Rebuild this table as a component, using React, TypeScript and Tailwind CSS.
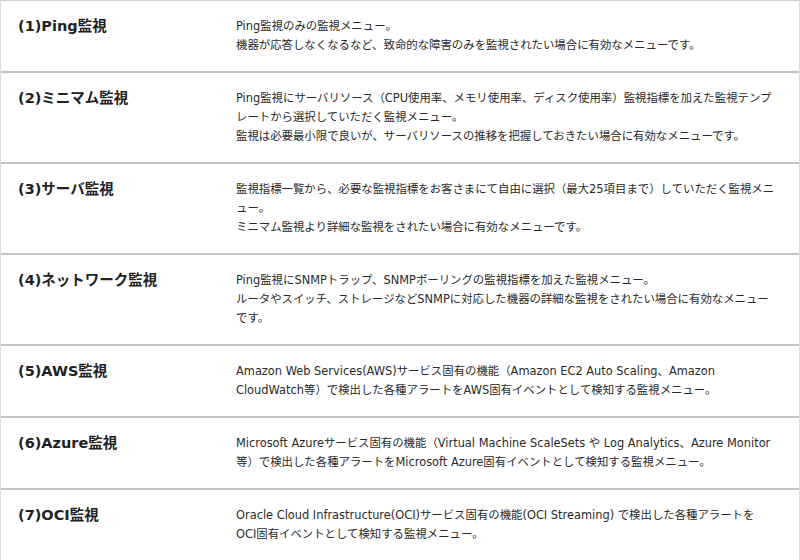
const rows: { title: string; lines: string[] }[] = [
  {
    title: "(1)Ping監視",
    lines: [
      "Ping監視のみの監視メニュー。",
      "機器が応答しなくなるなど、致命的な障害のみを監視されたい場合に有効なメニューです。",
    ],
  },
  {
    title: "(2)ミニマム監視",
    lines: [
      "Ping監視にサーバリソース（CPU使用率、メモリ使用率、ディスク使用率）監視指標を加えた監視テンプ",
      "レートから選択していただく監視メニュー。",
      "監視は必要最小限で良いが、サーバリソースの推移を把握しておきたい場合に有効なメニューです。",
    ],
  },
  {
    title: "(3)サーバ監視",
    lines: [
      "監視指標一覧から、必要な監視指標をお客さまにて自由に選択（最大25項目まで）していただく監視メニ",
      "ュー。",
      "ミニマム監視より詳細な監視をされたい場合に有効なメニューです。",
    ],
  },
  {
    title: "(4)ネットワーク監視",
    lines: [
      "Ping監視にSNMPトラップ、SNMPポーリングの監視指標を加えた監視メニュー。",
      "ルータやスイッチ、ストレージなどSNMPに対応した機器の詳細な監視をされたい場合に有効なメニュー",
      "です。",
    ],
  },
  {
    title: "(5)AWS監視",
    lines: [
      "Amazon Web Services(AWS)サービス固有の機能（Amazon EC2 Auto Scaling、Amazon",
      "CloudWatch等）で検出した各種アラートをAWS固有イベントとして検知する監視メニュー。",
    ],
  },
  {
    title: "(6)Azure監視",
    lines: [
      "Microsoft Azureサービス固有の機能（Virtual Machine ScaleSets や Log Analytics、Azure Monitor",
      "等）で検出した各種アラートをMicrosoft Azure固有イベントとして検知する監視メニュー。",
    ],
  },
  {
    title: "(7)OCI監視",
    lines: [
      "Oracle Cloud Infrastructure(OCI)サービス固有の機能(OCI Streaming) で検出した各種アラートを",
      "OCI固有イベントとして検知する監視メニュー。",
    ],
  },
];

export default function App() {
  return (
    <div className="w-[800px] h-[560px] bg-white overflow-hidden font-['DejaVu_Sans','Noto_Sans_CJK_JP',sans-serif]">
      <div className="border-x border-[#dcdcdc] border-b-2 border-b-[#c4c4c4]">
        {rows.map((row, i) => (
          <div
            key={row.title}
            className={
              "flex pt-4 pb-4 " + (i === 0 ? "border-t border-[#d0d0d0]" : "border-t-2 border-[#c4c4c4]")
            }
          >
            <div className="w-[235px] shrink-0 pl-[17px] text-[14.5px] leading-[19px] font-bold text-[#222]">
              {row.title}
            </div>
            <div className="flex-1 text-[11.4px] leading-[19px] text-[#2a2a2a] whitespace-nowrap">
              {row.lines.map((line) => (
                <div key={line}>{line}</div>
              ))}
            </div>
          </div>
        ))}
      </div>
    </div>
  );
}
